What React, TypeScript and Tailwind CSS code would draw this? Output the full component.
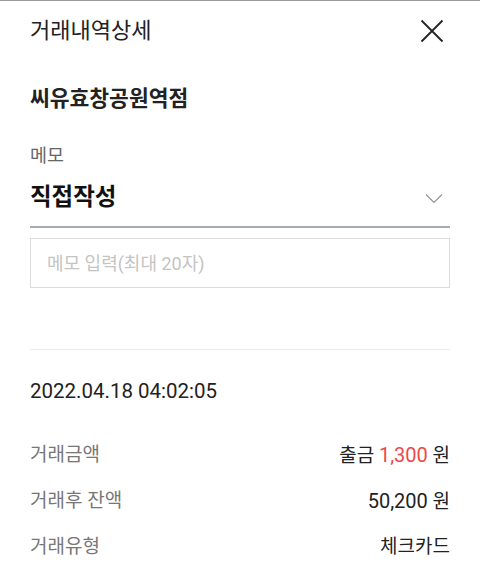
import React from "react";

export default function App() {
  const font = { fontFamily: "Roboto, 'Noto Sans CJK KR', sans-serif" };
  return (
    <div className="w-[480px] h-[568px] bg-white border-t border-[#9a9a9a] overflow-hidden" style={font}>
      <div className="px-[30px]">
        <div className="flex items-center justify-between h-[59px]">
          <div className="text-[22px] text-[#222]">거래내역상세</div>
          <svg width="24" height="24" viewBox="0 0 24 24" className="mr-[6px]">
            <path d="M1.5 1.5 L22.5 22.5 M22.5 1.5 L1.5 22.5" stroke="#222" strokeWidth="1.8" fill="none" />
          </svg>
        </div>
        <div className="mt-[24px] h-[30px] flex items-center text-[21.5px] font-bold text-[#222]">씨유효창공원역점</div>
        <div className="mt-[31px] h-[24px] flex items-center text-[18.5px] text-[#666]">메모</div>
        <div className="mt-[13px] flex items-center justify-between h-[32px]">
          <div className="text-[23.5px] font-bold text-[#111]">직접작성</div>
          <svg width="18" height="11" viewBox="0 0 18 11" className="mr-[7px]">
            <path d="M1 1.5 L9 9.5 L17 1.5" stroke="#8d929b" strokeWidth="1.1" fill="none" />
          </svg>
        </div>
        <div className="mt-[12px] border-b-2 border-[#a7abb3]" />
        <div className="mt-[10px] h-[50px] border border-[#dcdcdc] flex items-center px-[16px] text-[18px] text-[#c4c4c4]">
          메모 입력(최대 20자)
        </div>
        <div className="mt-[61px] border-t border-[#ececec]" />
        <div className="mt-[29px] h-[24px] flex items-center text-[20.5px] text-[#222]">2022.04.18 04:02:05</div>
        <div className="mt-[29px] flex flex-col text-[19px]">
          <div className="flex justify-between items-center h-[46px]">
            <span className="text-[#777]">거래금액</span>
            <span className="text-[#222]">출금 <span className="text-[20px] text-[#f04848]">1,300</span> 원</span>
          </div>
          <div className="flex justify-between items-center h-[46px]">
            <span className="text-[#777]">거래후 잔액</span>
            <span className="text-[#222]"><span className="text-[20px]">50,200</span> 원</span>
          </div>
          <div className="flex justify-between items-center h-[46px]">
            <span className="text-[#777]">거래유형</span>
            <span className="text-[#222]">체크카드</span>
          </div>
        </div>
      </div>
    </div>
  );
}
